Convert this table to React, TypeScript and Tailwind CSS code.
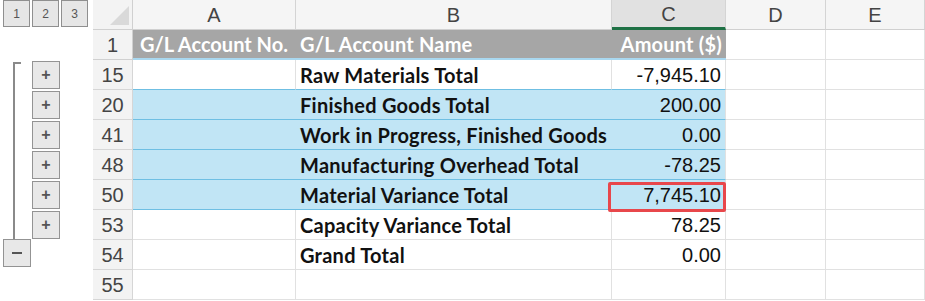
import React from "react";

const band = new Set(["20", "41", "48", "50"]);

type Row = { n: string; a?: string; b?: string; c?: string };

const rows: Row[] = [
  { n: "15", b: "Raw Materials Total", c: "-7,945.10" },
  { n: "20", b: "Finished Goods Total", c: "200.00" },
  { n: "41", b: "Work in Progress, Finished Goods", c: "0.00" },
  { n: "48", b: "Manufacturing Overhead Total", c: "-78.25" },
  { n: "50", b: "Material Variance Total", c: "7,745.10" },
  { n: "53", b: "Capacity Variance Total", c: "78.25" },
  { n: "54", b: "Grand Total", c: "0.00" },
  { n: "55" },
];

function OutlineBtn({ children }: { children: React.ReactNode }) {
  return (
    <div className="w-[28px] h-[28px] flex items-center justify-center bg-[#e8e8e8] border border-[#939393] text-[#555] font-['Liberation_Sans',sans-serif]">
      {children}
    </div>
  );
}

function Outline() {
  return (
    <div className="w-[93px] flex flex-col shrink-0">
      <div className="h-[30px] flex gap-[2px] pl-[3px] items-start">
        {["1", "2", "3"].map((t) => (
          <div
            key={t}
            className="w-[27px] h-[27px] flex items-center justify-center bg-[#e6e6e6] border border-[#8f8f8f] text-[12px] text-[#555] font-['Liberation_Sans',sans-serif]"
          >
            {t}
          </div>
        ))}
      </div>
      <div className="h-[30px]" />
      <div className="flex h-[180px]">
        <div className="w-[32px] pl-[13px] pt-[2px]">
          <div className="w-[8px] h-full border-l-2 border-t-2 border-[#8a8a8a]" />
        </div>
        <div className="flex flex-col">
          {[0, 1, 2, 3, 4, 5].map((i) => (
            <div key={i} className="h-[30px] pt-[1px]">
              <OutlineBtn>
                <span className="text-[16px] font-bold leading-none">+</span>
              </OutlineBtn>
            </div>
          ))}
        </div>
      </div>
      <div className="h-[30px] pl-[3px] -mt-[1px]">
        <OutlineBtn>
          <span className="block w-[10px] h-[2px] bg-[#555]" />
        </OutlineBtn>
      </div>
    </div>
  );
}

const hdrFont = "font-['Liberation_Sans',Arial,sans-serif]";
const cellFont = "font-['Lato','Liberation_Sans',sans-serif]";

export default function App() {
  return (
    <div className="w-[925px] h-[301px] bg-white flex overflow-hidden">
      <Outline />
      <div className="grid grid-cols-[40px_163px_316px_114px_100px_99px] auto-rows-[30px] shrink-0">
        {/* corner */}
        <div className="bg-[#f3f3f3] border-r border-b border-[#d0d0d0] relative">
          <svg className="absolute right-[3px] bottom-[4px]" width="19" height="19" viewBox="0 0 19 19">
            <polygon points="19,0 19,19 0,19" fill="#d9d9d9" />
          </svg>
        </div>
        {["A", "B", "C", "D", "E"].map((l) => (
          <div
            key={l}
            className={`flex items-center justify-center text-[20px] text-[#444] border-r border-[#d4d4d4] ${hdrFont} ${
              l === "C"
                ? "bg-[#e1e1e1] border-b-[3px] border-b-[#1f7145]"
                : "bg-[#f5f5f5] border-b border-b-[#d0d0d0]"
            }`}
          >
            {l}
          </div>
        ))}

        {/* row 1 header */}
        <div className={`bg-[#f3f3f3] border-r border-b border-[#d0d0d0] flex items-center justify-center text-[20px] text-[#444] ${hdrFont}`}>
          1
        </div>
        <div className={`bg-[#a6a6a6] border-b-2 border-[#a9d8f0] flex items-center pl-[7px] text-white font-bold text-[20px] whitespace-nowrap overflow-hidden ${cellFont}`}>
          G/L Account No.
        </div>
        <div className={`bg-[#a6a6a6] border-b-2 border-[#a9d8f0] flex items-center px-[4px] text-white font-bold text-[20px] tracking-[0.2px] whitespace-nowrap ${cellFont}`}>
          G/L Account Name
        </div>
        <div className={`bg-[#a6a6a6] border-b-2 border-[#a9d8f0] flex items-center justify-end px-[4px] text-white font-bold text-[20px] tracking-[0.2px] whitespace-nowrap ${cellFont}`}>
          Amount ($)
        </div>
        <div className="border-r border-b border-[#e1e1e1]" />
        <div className="border-r border-b border-[#e1e1e1]" />

        {rows.map((r) => {
          const isBand = band.has(r.n);
          const prevBlue = ["15", "20", "41", "48", "50"].includes(r.n);
          const tableCell = isBand
            ? "bg-[#c1e5f5] border-b border-[#6fbfe3]"
            : prevBlue
            ? "bg-white border-b border-[#6fbfe3]"
            : "bg-white border-b border-[#e1e1e1]";
          const vline = isBand ? "" : "border-r border-r-[#e1e1e1]";
          return (
            <React.Fragment key={r.n}>
              <div className={`bg-[#f3f3f3] border-r border-b border-[#d6d6d6] flex items-center justify-center text-[20px] text-[#444] ${hdrFont}`}>
                {r.n}
              </div>
              <div className={`${tableCell} ${vline}`} />
              <div className={`${tableCell} ${vline} flex items-center px-[4px] text-[20px] tracking-[0.25px] font-bold text-[#111] whitespace-nowrap ${cellFont}`}>
                {r.b}
              </div>
              <div
                className={`${tableCell} border-r border-r-[#e1e1e1] relative flex items-center justify-end px-[4px] text-[20px] text-[#111] ${hdrFont}`}
              >
                {r.c}
                {r.n === "50" && (
                  <div className="absolute z-10 left-[-4px] right-[-1px] top-[2px] bottom-[-3px] border-[3px] border-[#e8474b] rounded-[2px]" />
                )}
              </div>
              <div className="border-r border-b border-[#e1e1e1]" />
              <div className="border-r border-b border-[#e1e1e1]" />
            </React.Fragment>
          );
        })}
      </div>
    </div>
  );
}
